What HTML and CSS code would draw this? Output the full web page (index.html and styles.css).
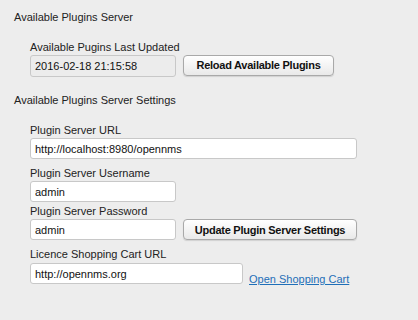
FILE: index.html
```html
<html lang="en">
<head>
    <meta charset="UTF-8">
    <title>Plugin Manager</title>
    <link rel="stylesheet" href="styles.css">
</head>
<body>
    <div class="panel">
        <p class="section-title first">Available Plugins Server</p>
        <div class="group">
            <label class="field-label">Available Pugins Last Updated</label>
            <div class="row">
                <input class="input readonly w-short" type="text" value="2016-02-18 21:15:58" readonly>
                <button class="button w-reload">Reload Available Plugins</button>
            </div>
        </div>

        <p class="section-title">Available Plugins Server Settings</p>
        <div class="group">
            <label class="field-label">Plugin Server URL</label>
            <input class="input w-long" type="text" value="http://localhost:8980/opennms">

            <label class="field-label spaced">Plugin Server Username</label>
            <input class="input w-short" type="text" value="admin">

            <label class="field-label tight">Plugin Server Password</label>
            <div class="row">
                <input class="input w-short" type="text" value="admin">
                <button class="button w-update">Update Plugin Server Settings</button>
            </div>

            <label class="field-label spaced">Licence Shopping Cart URL</label>
            <div class="row">
                <input class="input w-mid" type="text" value="http://opennms.org">
                <a class="link" href="#">Open Shopping Cart</a>
            </div>
        </div>
    </div>
</body>
</html>
```

FILE: styles.css
```css
body {
    margin: 0;
    background-color: #ededed;
    font-family: 'Liberation Sans', Arial, sans-serif;
    font-size: 11px;
    color: #222;
}
.panel {
    padding: 10px 0 0 14px;
}
.section-title {
    margin: 16px 0 0 0;
    line-height: 14px;
}
.section-title.first {
    margin-top: 0;
}
.group {
    padding: 16px 0 0 16px;
}
.field-label {
    display: block;
    line-height: 14px;
    margin-bottom: 1px;
}
.field-label.spaced {
    margin-top: 7px;
}
.field-label.tight {
    margin-top: 2px;
}
.row {
    display: flex;
    align-items: center;
    gap: 6px;
}
.input {
    box-sizing: border-box;
    height: 21px;
    padding: 0 4px;
    border: 1px solid #c8c8c8;
    border-radius: 3px;
    background: #fff;
    font-family: 'Liberation Sans', Arial, sans-serif;
    font-size: 11px;
    color: #111;
    display: block;
}
.input.readonly {
    height: 22px;
    background: #ececec;
}
.w-short { width: 146px; }
.w-mid { width: 213px; }
.w-long { width: 327px; }
.button {
    height: 21px;
    padding: 0;
    margin-left: 1px;
    border: 1px solid #a9a9a9;
    border-radius: 4px;
    background: linear-gradient(#ffffff, #e9e9e9);
    box-shadow: 0 1px 1px rgba(0, 0, 0, 0.12);
    font-family: 'Liberation Sans', Arial, sans-serif;
    font-size: 11px;
    font-weight: bold;
    letter-spacing: -0.25px;
    color: #111;
}
.w-reload { width: 151px; margin-top: -2px; }
.w-update { width: 174px; }
.link {
    color: #1f6fb8;
    text-decoration: underline;
    margin-top: 11px;
}
```
